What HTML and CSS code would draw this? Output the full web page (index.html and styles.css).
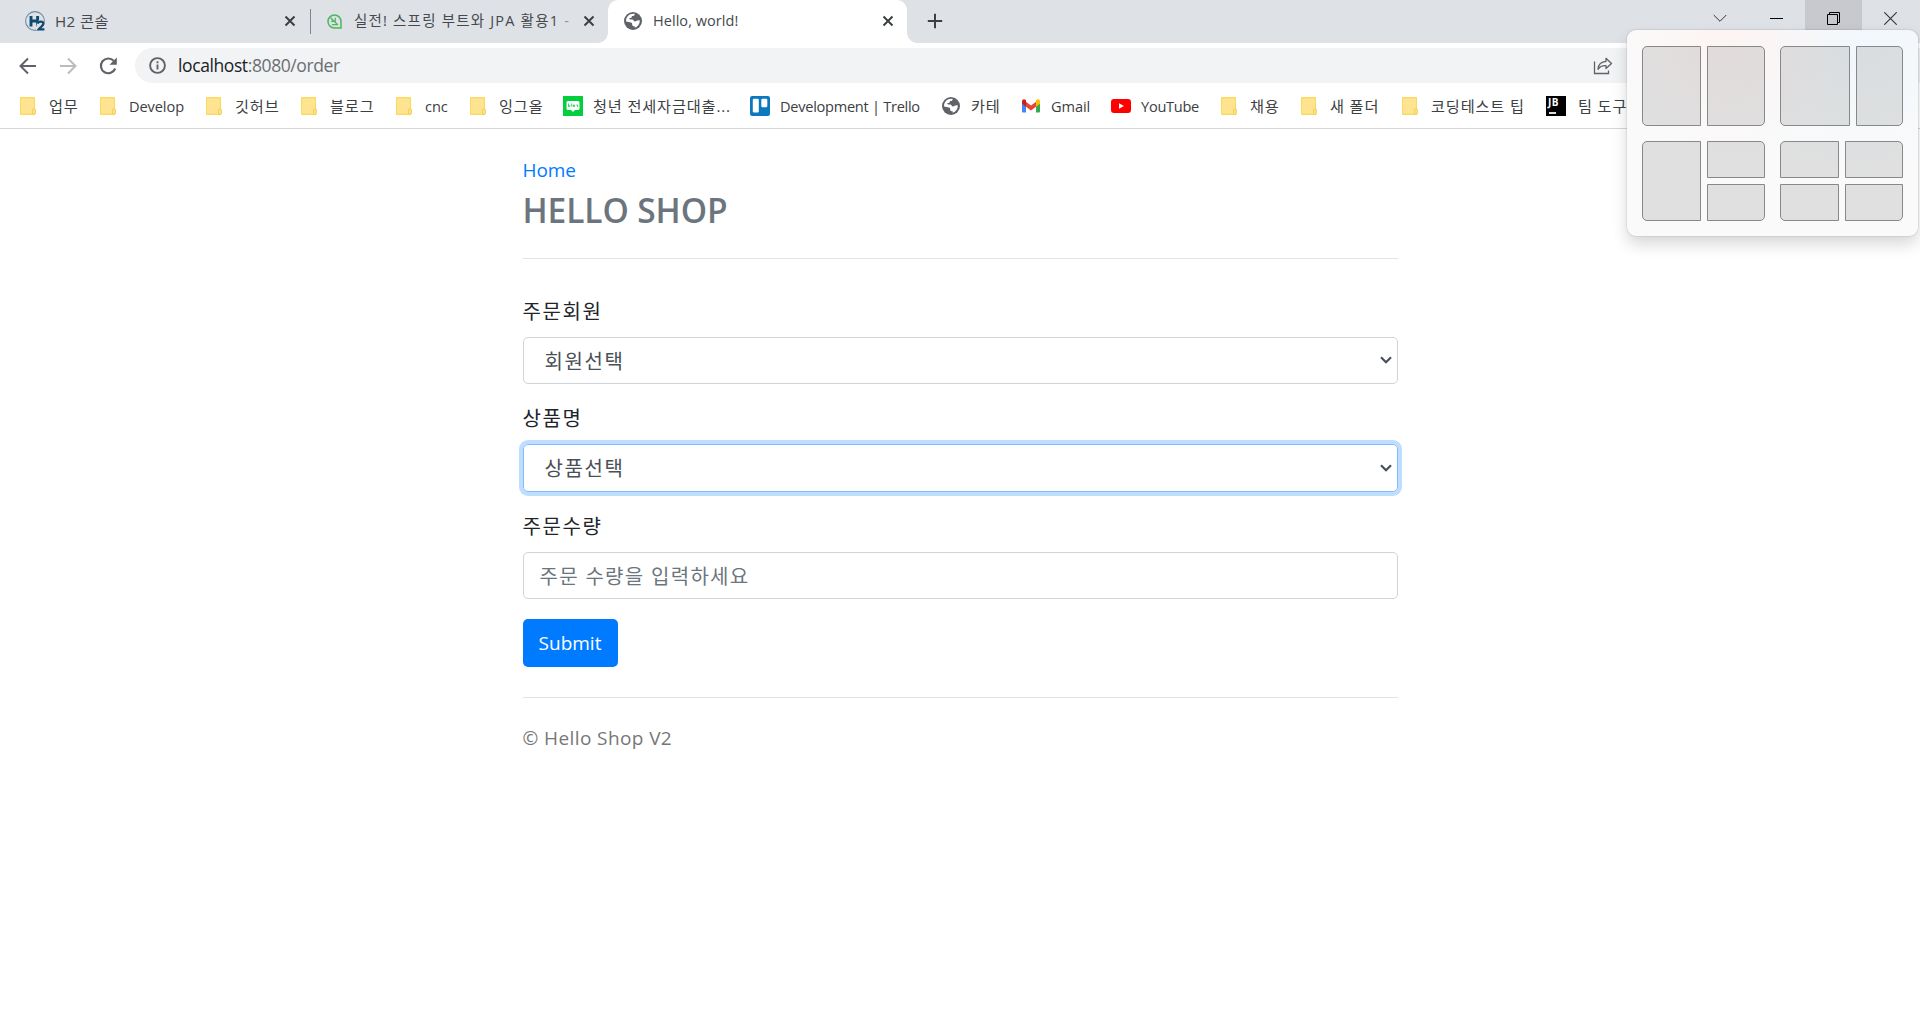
FILE: index.html
```html
<!DOCTYPE html>
<html lang="ko">
<head>
<meta charset="utf-8">
<title>Hello, world!</title>
<link rel="stylesheet" href="styles.css">
</head>
<body>
<svg width="0" height="0" class="defs">
  <symbol id="folder" viewBox="0 0 16 18"><path d="M1 0h13a1 1 0 0 1 1 1v17H1a1 1 0 0 1-1-1V1a1 1 0 0 1 1-1z" fill="#fbd95f"/><path d="M1 1.300h13v15.400H1z" fill="#fee491"/><path d="M12.500 17.500v-4.600q0-1.200 1.500-1.200t1.500 1.200v3q0 1.600-1.600 1.600z" fill="#fee07c" stroke="#f2cc50" stroke-width=".8"/></symbol>
  <symbol id="globe" viewBox="0 0 18 18"><circle cx="9" cy="9" r="9" fill="#5f6368"/><path d="M10.7 1.9c-.1 1.7-1.2 2-2.400 2.200-.7.2-.4 1.700-1.300 1.900-.9.1-1.600-.3-1.700.5 0 1 .9.9 2.700.9 1.800.1 1.600 1.900 2.900 2 1.500.1 1.600-1.500 4.800-1.200.4 3.400-1.800 6.500-5 7.500v-1.500c-1.500 0-2.500-.4-2.500-1.800 0-1-.3-1.600-1.400-1.800L2.100 9.400C1.800 5 5.300 1.300 10.700 1.900z" fill="#fff"/></symbol>
  <symbol id="x" viewBox="0 0 12 12"><path d="M1.500 1.500l9 9M10.500 1.500l-9 9" stroke="#3c4043" stroke-width="2" fill="none"/></symbol>
</svg>

<header class="browser">
  <div class="tabs">
    <div class="tab tab-h2">
      <svg class="i20" viewBox="0 0 20 20"><circle cx="10" cy="10" r="9.400" fill="none" stroke="#6b8ca6" stroke-width="1.100"/><path d="M6 5v10.500M12.600 5v10.500M5 10h8" stroke="#0f4a73" stroke-width="2.900" fill="none"/><path d="M12.200 11.500q.8-2.400 3.600-2.400 3.600 0 3.600 2.800c0 1.700-1.500 3-3 4.600h3.100v3h-8.500v-2z" fill="#dee1e6"/><path d="M12.600 12.600q.5-2 3-2 2.800 0 2.800 2c0 2-2.700 3.300-4.600 5.700h5.600" stroke="#0f4a73" stroke-width="2.300" fill="none"/></svg>
      <span class="tab-title t1">H2 콘솔</span>
      <svg class="close"><use href="#x"/></svg>
    </div>
    <div class="tab tab-lecture">
      <svg class="i14" viewBox="0 0 15 15"><path d="M7.500 1A6.500 6.500 0 0 1 14 7.500V14H7.500A6.500 6.500 0 0 1 7.500 1z" fill="none" stroke="#4cb75c" stroke-width="1.500"/><path d="M3.600 3.800L11 11M8.300 3.800v4M4 7.300h3.300M5 10.600h5.500" fill="none" stroke="#4cb75c" stroke-width="1.200"/></svg>
      <span class="tab-title t2">실전! 스프링 부트와 JPA 활용1 <em>-</em></span>
      <svg class="close"><use href="#x"/></svg>
    </div>
    <div class="tab tab-active">
      <svg class="i18"><use href="#globe"/></svg>
      <span class="tab-title t3">Hello, world!</span>
      <svg class="close"><use href="#x"/></svg>
    </div>
    <svg class="plus" viewBox="0 0 16 16"><path d="M8 .8v14.400M.8 8h14.400" stroke="#3c4043" stroke-width="2"/></svg>
    <div class="winctl">
      <span><svg width="14" height="9" viewBox="0 0 14 9"><path d="M.7 1L7 7.300 13.300 1" fill="none" stroke="#333"/></svg></span>
      <span><svg width="13" height="9" viewBox="0 0 13 9"><path d="M0 4.500h13" stroke="#000"/></svg></span>
      <span class="hot"><svg width="13" height="13" viewBox="0 0 13 13"><path d="M.5 2.500h10v10H.5zM2.500 2.500V.5h10v10h-2" fill="none" stroke="#000"/></svg></span>
      <span><svg width="13" height="13" viewBox="0 0 13 13"><path d="M.3.3l12.400 12.400M12.700.3L.3 12.700" stroke="#333" stroke-width="1.100"/></svg></span>
    </div>
  </div>
  <div class="toolbar">
    <svg class="nav" viewBox="0 0 20 20"><path d="M18 10H3M10 2.500L2.500 10l7.500 7.500" fill="none" stroke="#5f6368" stroke-width="2"/></svg>
    <svg class="nav" viewBox="0 0 20 20"><path d="M2 10h15M10 2.500l7.500 7.500-7.500 7.500" fill="none" stroke="#babcbe" stroke-width="2"/></svg>
    <svg class="nav" viewBox="0 0 20 20"><path d="M15.700 4.800A7.400 7.400 0 1 0 17.200 12.500" fill="none" stroke="#5f6368" stroke-width="2.100"/><path d="M18.800 1.500v7.300h-7.300z" fill="#5f6368"/></svg>
    <div class="omnibox">
      <svg class="info" viewBox="0 0 17 17"><circle cx="8.500" cy="8.500" r="7.400" fill="none" stroke="#5f6368" stroke-width="1.900"/><path d="M8.500 7.500v5M8.500 4.300v1.900" stroke="#5f6368" stroke-width="1.900"/></svg>
      <span class="url"><b>localhost</b>:8080/order</span>
      <svg class="share" viewBox="0 0 20 18"><path d="M1.500 4.500v12h14v-3" fill="none" stroke="#5f6368" stroke-width="1.300"/><path d="M13 1.300l5.500 5.200-5.500 5V8.600c-4-.2-6.300 1-8 3.700.3-4.700 3-7.500 8-7.900z" fill="none" stroke="#5f6368" stroke-width="1.300" stroke-linejoin="round"/></svg>
    </div>
  </div>
  <nav class="bookmarks">
    <a class="k"><svg class="f"><use href="#folder"/></svg>업무</a>
    <a><svg class="f"><use href="#folder"/></svg>Develop</a>
    <a class="k"><svg class="f"><use href="#folder"/></svg>깃허브</a>
    <a class="k"><svg class="f"><use href="#folder"/></svg>블로그</a>
    <a><svg class="f"><use href="#folder"/></svg>cnc</a>
    <a class="k"><svg class="f"><use href="#folder"/></svg>잉그올</a>
    <a class="k s"><svg class="i20" viewBox="0 0 20 20"><path d="M0 0h20v20H0z" fill="#03cf3e"/><path d="M5 5h10q1.500 0 1.500 1.500v6q0 1.500-1.500 1.500h-3l-2 2-2-2H5q-1.500 0-1.500-1.500v-6Q3.500 5 5 5z" fill="#fff"/><path d="M5.500 7.500v3h1.300V9M8.700 7.500v3.200M10.300 9h1.300v1.500h-1.300zM13.300 9h1.300v2.200" fill="none" stroke="#03cf3e" stroke-width=".8"/></svg>청년 전세자금대출...</a>
    <a class="s"><svg class="i20" viewBox="0 0 20 20"><rect width="20" height="20" rx="2.200" fill="#0c79bf"/><rect x="2.800" y="2.800" width="6" height="13.700" rx="1.200" fill="#fff"/><rect x="11.300" y="2.800" width="6" height="8.500" rx="1.200" fill="#fff"/></svg><span class="trello">Development | Trello</span></a>
    <a class="k g"><svg class="i18"><use href="#globe"/></svg>카테</a>
    <a class="g"><svg class="i18" viewBox="0 0 18 18"><path d="M0 4v10.500q0 1 1 1h3V7z" fill="#4285f4"/><path d="M18 4v10.500q0 1-1 1h-3V7z" fill="#34a853"/><path d="M4 4.800l5 3.800 5-3.800v5L9 13.400 4 9.800z" fill="#ea4335"/><path d="M0 4.200Q0 2.200 2 2.200q.8 0 1.400.6L4 3.300v6.500L0 6.800z" fill="#c5221f"/><path d="M18 4.200q0-2-2-2-.8 0-1.400.6l-.6.500v6.500l4-3z" fill="#fbbc04"/></svg>Gmail</a>
    <a class="s"><svg class="i20" viewBox="0 0 20 20"><rect y="3" width="20" height="14" rx="3" fill="#f00"/><path d="M8 7.200l5 2.800-5 2.800z" fill="#fff"/></svg><span class="trello">YouTube</span></a>
    <a class="k"><svg class="f"><use href="#folder"/></svg>채용</a>
    <a class="k"><svg class="f"><use href="#folder"/></svg>새 폴더</a>
    <a class="k"><svg class="f"><use href="#folder"/></svg>코딩테스트 팁</a>
    <a class="k s"><span class="jb">JB<i></i></span>팀 도구</a>
  </nav>
</header>

<aside class="snap">
  <div class="layout halves"><i class="tl bl"></i><i class="tr br"></i></div>
  <div class="layout wide"><i class="tl bl"></i><i class="tr br"></i></div>
  <div class="layout three"><i class="tl bl tall"></i><i class="tr"></i><i class="br"></i></div>
  <div class="layout four"><i class="tl"></i><i class="tr"></i><i class="bl"></i><i class="br"></i></div>
</aside>

<main class="container">
  <a class="home">Home</a>
  <h3>HELLO SHOP</h3>
  <hr>
  <form>
    <label>주문회원</label>
    <div class="field select"><span>회원선택</span><svg viewBox="0 0 12 8"><path d="M1 1.200l5 5 5-5" fill="none" stroke="#495057" stroke-width="2.200"/></svg></div>
    <label>상품명</label>
    <div class="field select focus"><span>상품선택</span><svg viewBox="0 0 12 8"><path d="M1 1.200l5 5 5-5" fill="none" stroke="#495057" stroke-width="2.200"/></svg></div>
    <label>주문수량</label>
    <div class="field placeholder">주문 수량을 입력하세요</div>
    <button type="button">Submit</button>
  </form>
  <hr class="end">
  <footer>© Hello Shop V2</footer>
</main>
</body>
</html>
```
FILE: styles.css
```css
* { box-sizing: border-box; }
body {
  margin: 0;
  background: #fff;
  color: #212529;
  font-family: "Open Sans", "Noto Sans CJK KR", sans-serif;
  font-size: 19px;
  overflow: hidden;
}
svg { flex: none; display: block; }
.defs { position: absolute; }
.i14 { width: 15px; height: 15px; }
.i18 { width: 18px; height: 18px; }
.i20 { width: 20px; height: 20px; }

/* Tab strip */
.tabs { display: flex; height: 43px; background: #dee1e6; }
.tab { display: flex; align-items: center; height: 43px; padding-bottom: 1px; color: #45494d; font-size: 14.5px; }
.tab-title { flex: 1; white-space: nowrap; overflow: hidden; line-height: 24px; }
.close { width: 12px; height: 12px; }
.tab-h2 { width: 310px; padding-left: 25px; padding-right: 14px; gap: 10px; }
.tab-lecture {
  width: 298px;
  padding-left: 17px;
  padding-right: 13px;
  background: linear-gradient(#80868b, #80868b) 0 9px / 1px 25px no-repeat;
}
.tab-lecture .close { margin-left: 8px; }
.t1 { font-size: 15.2px; letter-spacing: .4px; }
.t2 { margin-left: 12px; letter-spacing: 1.200px; }
.t2 em { font-style: normal; opacity: .5; }
.t3 { letter-spacing: .05px; }
.tab-active {
  width: 299px;
  padding-left: 16px;
  padding-right: 13px;
  gap: 11px;
  background: #fff;
  border-radius: 10px 10px 0 0;
  position: relative;
}
.tab-active::before, .tab-active::after {
  content: "";
  position: absolute;
  bottom: 0;
  width: 10px;
  height: 10px;
}
.tab-active::before { left: -10px; background: radial-gradient(circle at 0 0, transparent 9.500px, #fff 10px); }
.tab-active::after { right: -10px; background: radial-gradient(circle at 100% 0, transparent 9.500px, #fff 10px); }
.plus { width: 16px; height: 16px; margin: 13px 0 0 20px; }
.winctl { display: flex; margin: 0 1px 0 auto; height: 37px; }
.winctl span { width: 57px; display: flex; align-items: center; justify-content: center; }
.winctl .hot { background: #c7c9ce; }

/* Address bar */
.toolbar { display: flex; align-items: center; height: 45px; padding: 0 0 0 18px; gap: 20px; }
.nav { width: 20px; height: 20px; }
.omnibox {
  display: flex;
  align-items: center;
  flex: 1;
  height: 35px;
  margin-left: -3px;
  padding-left: 14px;
  background: #f1f3f4;
  border-radius: 18px 0 0 18px;
}
.info { width: 17px; height: 17px; }
.url { margin: 0 0 2px 12px; font-size: 17.5px; letter-spacing: -.4px; color: #6b6f73; }
.url b { font-weight: 400; color: #202124; }
.share { width: 20px; height: 18px; margin: 0 307px 0 auto; }

/* Bookmarks */
.bookmarks {
  display: grid;
  grid-template-columns: 80px 106px 95px 95px 74px 93px 187px 192px 80px 89px 110px 80px 101px 144px auto;
  height: 41px;
  padding: 0 0 5px 20px;
  border-bottom: 1px solid #d5d7da;
  color: #3c4043;
  font-size: 14.6px;
}
.bookmarks a { display: flex; align-items: center; white-space: nowrap; line-height: 20px; letter-spacing: -.1px; }
.bookmarks .k { font-size: 15.200px; letter-spacing: .85px; }
.bookmarks .trello { letter-spacing: -.28px; }
.f { width: 16px; height: 18px; margin-right: 13px; }
.s .i20 { margin-right: 10px; }
.g .i18 { margin-right: 11px; }
.jb {
  display: flex;
  flex-direction: column;
  width: 20px;
  height: 20px;
  padding: 1px 2px;
  margin-right: 12px;
  background: #000;
  color: #fff;
  font-size: 10px;
  line-height: 10px;
  font-weight: 700;
  letter-spacing: .5px;
}
.jb i { width: 7px; height: 2px; margin: 5px 0 0 1px; background: #ddd; }

/* Snap layout flyout */
.snap {
  position: absolute;
  left: 1627px;
  top: 30px;
  width: 291px;
  height: 206px;
  padding: 16px 15px 15px;
  display: grid;
  grid-template-columns: 123px 123px;
  grid-template-rows: 80px 80px;
  gap: 15px;
  border-radius: 9px;
  background: radial-gradient(ellipse at 35% 0, #fdf4f3, transparent 45%), radial-gradient(ellipse at 80% 5%, #f1f7fc, transparent 50%), #fafafa;
  box-shadow: 0 0 1px 1px rgba(0, 0, 0, .07), 0 8px 16px rgba(0, 0, 0, .16);
}
.layout { display: grid; gap: 6px; grid-template-columns: 59px 58px; }
.layout i { border: 1px solid #888; background: rgba(110, 110, 110, .19); }
.wide { grid-template-columns: 70px 47px; }
.three, .four { grid-template-rows: 37px 37px; }
.tall { grid-row: span 2; }
.tl { border-top-left-radius: 5px; }
.tr { border-top-right-radius: 5px; }
.bl { border-bottom-left-radius: 5px; }
.br { border-bottom-right-radius: 5px; }

/* Order page */
.container { width: 875px; margin: 26px auto 0; }
.home { display: block; line-height: 30px; color: #007bff; letter-spacing: -.1px; }
h3 { margin: 4px 0 0; font-size: 33.500px; line-height: 42px; font-weight: 600; color: #6c757d; letter-spacing: -.1px; }
hr { margin: 27px 0 37.500px; border: 0; border-top: 1px solid #e2e3e5; }
label { display: block; line-height: 30px; margin-bottom: 10px; font-size: 20px; letter-spacing: 1.600px; }
.field {
  display: flex;
  align-items: center;
  height: 47.500px;
  margin-bottom: 20px;
  padding: 0 16px;
  border: 1px solid #ced4da;
  border-radius: 5px;
  color: #495057;
  font-size: 20px;
  letter-spacing: 1.600px;
}
.select { justify-content: space-between; padding: 0 5px 0 21px; }
.select svg { width: 12px; height: 8px; }
.focus { border-color: #80bdff; box-shadow: 0 0 0 4px #bfdeff; }
.placeholder { color: #6c757d; letter-spacing: 1.300px; }
button {
  display: block;
  width: 95px;
  height: 48px;
  padding: 0;
  border: 0;
  border-radius: 5px;
  background: #007bff;
  color: #fff;
  font: inherit;
}
.end { margin: 30px 0 25px; }
footer { line-height: 30px; color: #777; letter-spacing: .4px; }
```
